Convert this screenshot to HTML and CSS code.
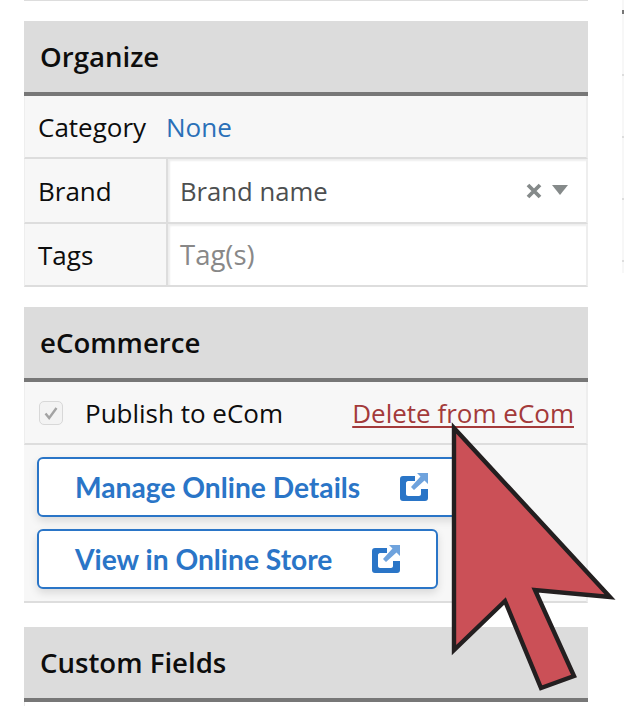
FILE: index.html
```html
<!DOCTYPE html>
<html lang="en">
  <head>
    <meta charset="UTF-8" />
    <title>Product details</title>
    <link rel="stylesheet" href="styles.css">
  </head>
  <body>
    <div class="page">
      <div class="main">
        <div class="top-line"></div>

        <div class="panel panel-organize">
          <h2 class="panel-title">Organize</h2>
          <div class="row row-category">
            <span class="category-label">Category</span>
            <a class="category-link">None</a>
          </div>
          <div class="row row-brand">
            <div class="field-label">Brand</div>
            <div class="field-value">
              <span class="brand-name">Brand name</span>
              <svg class="clear-icon" viewBox="0 0 16 16" width="16" height="16">
                <path d="M2 2L14 14M14 2L2 14" stroke="#858a8a" stroke-width="3.8" fill="none"/>
              </svg>
              <svg class="caret-icon" viewBox="0 0 16 10" width="16" height="10">
                <polygon points="0,0 16,0 8,10" fill="#858a8a"/>
              </svg>
            </div>
          </div>
          <div class="row row-tags">
            <div class="field-label">Tags</div>
            <div class="field-value placeholder">Tag(s)</div>
          </div>
        </div>

        <div class="panel panel-ecom">
          <h2 class="panel-title">eCommerce</h2>
          <div class="row row-publish">
            <span class="checkbox">
              <svg viewBox="0 0 24 24" width="24" height="24">
                <path d="M6 12.5L10 17.5L18 6.5" stroke="#a3a3a3" stroke-width="2.6" fill="none"/>
              </svg>
            </span>
            <span class="publish-label">Publish to eCom</span>
            <a class="delete-link">Delete from eCom</a>
          </div>
          <div class="ecom-actions">
            <a class="online-btn btn-manage">
              <span>Manage Online Details</span>
              <svg class="open-icon" viewBox="0 0 28 28" width="28" height="28">
                <path d="M3 3H15V8H8C7 8 6 9 6 10V21C6 22 7 23 8 23H19C20 23 21 22 21 21V16H28V25C28 27 27 28 25 28H3C1 28 0 27 0 25V6C0 4 1 3 3 3Z" fill="#2a75c7"/>
                <path d="M17 0H28V11L24.5 7.5L14 17L11 14L20.5 3.5Z" fill="#6fa3dd"/>
              </svg>
            </a>
            <a class="online-btn btn-view">
              <span>View in Online Store</span>
              <svg class="open-icon" viewBox="0 0 28 28" width="28" height="28">
                <path d="M3 3H15V8H8C7 8 6 9 6 10V21C6 22 7 23 8 23H19C20 23 21 22 21 21V16H28V25C28 27 27 28 25 28H3C1 28 0 27 0 25V6C0 4 1 3 3 3Z" fill="#2a75c7"/>
                <path d="M17 0H28V11L24.5 7.5L14 17L11 14L20.5 3.5Z" fill="#6fa3dd"/>
              </svg>
            </a>
          </div>
        </div>

        <div class="panel panel-custom">
          <h2 class="panel-title">Custom Fields</h2>
          <div class="custom-body"></div>
        </div>
      </div>

      <div class="side">
        <div class="side-head"></div>
        <div class="side-row"></div>
        <div class="side-row"></div>
        <div class="side-row"></div>
        <div class="side-row"></div>
      </div>
    </div>

    <svg class="cursor" viewBox="0 0 624 706" width="624" height="706">
      <polygon points="454,428 610,597 535,590 574,676 541,688 505,601 454,650" fill="#cb5057" stroke="#231f20" stroke-width="4.4"/>
    </svg>
  </body>
</html>
```

FILE: styles.css
```css
html, body {
  margin: 0;
  height: 706px;
  overflow: hidden;
  background-color: #fff;
}
body {
  font-family: "Open Sans", sans-serif;
  font-size: 26px;
  color: #0d0d0d;
  position: relative;
}
.page {
  display: flex;
  gap: 34px;
  padding-left: 24px;
}
.main {
  width: 564px;
  flex-shrink: 0;
}
.top-line {
  height: 1px;
  background-color: #ddd;
  margin-bottom: 20px;
}
.panel-organize {
  margin-bottom: 20px;
}
.panel-ecom {
  margin-bottom: 24px;
}
.panel-title {
  box-sizing: border-box;
  margin: 0;
  height: 75px;
  line-height: 71px;
  padding-left: 16px;
  font-size: 27.6px;
  font-weight: 600;
  color: #0d0d0d;
  background-color: #dcdcdc;
  border-bottom: 4px solid #777;
}
.custom-body {
  height: 10px;
  border-left: 1px solid #e8e8e8;
}
.row {
  box-sizing: border-box;
  display: flex;
  align-items: center;
  background-color: #f7f7f7;
  border-bottom: 2px solid #ddd;
  border-right: 2px solid #eee;
  border-left: 1px solid #eee;
}
.row-category {
  height: 63px;
  padding-left: 13px;
}
.category-label {
  width: 128px;
}
.category-link {
  color: #2a70b8;
}
.row-brand {
  height: 65px;
  align-items: stretch;
}
.row-tags {
  height: 63px;
  align-items: stretch;
}
.field-label {
  box-sizing: border-box;
  width: 143px;
  padding-left: 13px;
  display: flex;
  align-items: center;
  border-right: 2px solid #ddd;
}
.field-value {
  flex: 1;
  display: flex;
  align-items: center;
  padding-left: 12px;
  font-size: 25.7px;
  color: #4d4f50;
  background-color: #fff;
  box-shadow: inset 2px 2px 2px #eee;
}
.brand-name {
  flex: 1;
  padding-top: 2px;
}
.clear-icon {
  margin-right: 10px;
}
.caret-icon {
  margin-right: 18px;
  margin-bottom: 2px;
}
.placeholder {
  font-size: 27.5px;
  color: #888;
}
.row-publish {
  height: 63px;
  padding-left: 14px;
}
.checkbox {
  box-sizing: border-box;
  width: 24px;
  height: 24px;
  margin-right: 22px;
  border: 1px solid #d8d8d8;
  border-radius: 5px;
  background-color: #f3f3f3;
  display: flex;
  align-items: center;
  justify-content: center;
}
.publish-label {
  flex: 1;
}
.delete-link {
  color: #a33a3a;
  text-decoration: underline;
  text-underline-offset: 3px;
  text-decoration-thickness: 2px;
  margin-right: 12px;
}
.ecom-actions {
  box-sizing: border-box;
  height: 158px;
  padding: 12px 0 0 13px;
  background-color: #f7f7f7;
  border-bottom: 2px solid #ddd;
  border-right: 2px solid #eee;
  display: flex;
  flex-direction: column;
  align-items: flex-start;
  gap: 12px;
}
.online-btn {
  box-sizing: border-box;
  height: 60px;
  display: flex;
  align-items: center;
  font-family: Lato, sans-serif;
  font-size: 28.2px;
  font-weight: 700;
  color: #2a75c7;
  background-color: #fff;
  border: 2px solid #2a75c7;
  border-radius: 6px;
  box-shadow: 0 4px 8px rgba(0, 0, 0, 0.12);
}
.btn-manage {
  width: 433px;
  padding-left: 36px;
}
.btn-view {
  width: 401px;
  padding-left: 36px;
}
.open-icon {
  margin-left: 40px;
}
.side {
  width: 12px;
  flex-shrink: 0;
  background-color: #f7f7f7;
  height: 263px;
  padding-top: 10px;
}
.side-head {
  height: 4px;
  background-color: #777;
}
.side-row {
  box-sizing: border-box;
  height: 62px;
  border-bottom: 2px solid #ddd;
}
.cursor {
  position: absolute;
  left: 0;
  top: 0;
}
```
